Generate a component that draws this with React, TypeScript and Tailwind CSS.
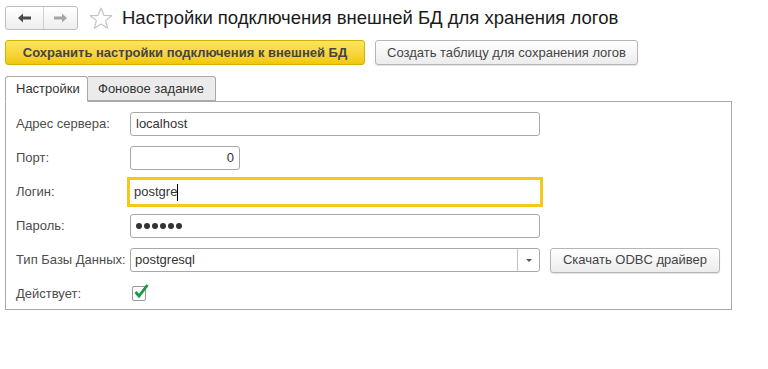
import React from "react";

const font = { fontFamily: '"Liberation Sans", Arial, sans-serif' };

const Field = ({ label, children }: { label: string; children: React.ReactNode }) => (
  <div className="flex items-center h-6">
    <span className="w-[114px] shrink-0 text-[13px] text-[#4d4d4d] whitespace-nowrap">{label}</span>
    {children}
  </div>
);

const inputCls =
  "h-6 border border-[#a9a9a9] rounded-[3px] bg-white px-[5px] flex items-center text-[13px] text-[#333]";

export default function App() {
  return (
    <div className="w-[768px] h-[369px] bg-white pl-[5px] pt-[6px]" style={font}>
      {/* header */}
      <div className="flex items-center h-6">
        <div className="flex h-6 w-[73px] border border-[#bdbdbd] rounded-[3px] bg-gradient-to-b from-white to-[#eeeeee]">
          <div className="w-[38px] flex items-center justify-center border-r border-[#d0d0d0]">
            <svg width="13" height="10" viewBox="0 0 13 10">
              <path d="M0 5 L5 0.5 L5 3.5 L13 3.5 L13 6.5 L5 6.5 L5 9.5 Z" fill="#4a4a4a" />
            </svg>
          </div>
          <div className="flex-1 flex items-center justify-center">
            <svg width="13" height="10" viewBox="0 0 13 10">
              <path d="M13 5 L8 0.5 L8 3.5 L0 3.5 L0 6.5 L8 6.5 L8 9.5 Z" fill="#a6a6a6" />
            </svg>
          </div>
        </div>
        <svg className="ml-[11px]" width="24" height="23" viewBox="0 0 24 23">
          <path
            d="M12 1 L14.9 8.3 L22.7 8.7 L16.6 13.6 L18.7 21.2 L12 16.9 L5.3 21.2 L7.4 13.6 L1.3 8.7 L9.1 8.3 Z"
            fill="none"
            stroke="#c4c4c4"
            strokeWidth="1.2"
            strokeLinejoin="round"
          />
        </svg>
        <h1 className="ml-[9px] text-[18.5px] text-[#1a1a1a] leading-none">
          Настройки подключения внешней БД для хранения логов
        </h1>
      </div>

      {/* toolbar */}
      <div className="flex items-center gap-[10px] mt-[10px]">
        <button className="h-[25px] w-[360px] border border-[#d4b100] rounded-[3px] bg-gradient-to-b from-[#fde55d] to-[#f1c800] text-[13px] font-bold text-[#444]">
          Сохранить настройки подключения к внешней БД
        </button>
        <button className="h-[25px] w-[263px] border border-[#b5b5b5] rounded-[3px] bg-gradient-to-b from-white to-[#ececec] text-[13px] text-[#444] shadow-[0_1px_1px_rgba(0,0,0,0.12)]">
          Создать таблицу для сохранения логов
        </button>
      </div>

      {/* tabs */}
      <div className="flex mt-[11px] h-[25px] relative z-10">
        <div className="w-[83px] h-[26px] border border-[#a9a9a9] border-b-white rounded-t-[3px] bg-white text-[13px] text-[#333] flex items-center pl-[10px]">
          Настройки
        </div>
        <div className="w-[128px] h-[25px] border border-l-0 border-[#a9a9a9] rounded-tr-[3px] bg-[#ebebeb] text-[13px] text-[#333] flex items-center pl-[10px]">
          Фоновое задание
        </div>
      </div>

      {/* panel */}
      <div className="w-[727px] h-[209px] border border-[#a9a9a9] pl-[10px] pt-[10px] flex flex-col gap-[10px]">
        <Field label="Адрес сервера:">
          <div className={`${inputCls} w-[410px]`}>localhost</div>
        </Field>
        <Field label="Порт:">
          <div className={`${inputCls} w-[110px] justify-end`}>0</div>
        </Field>
        <Field label="Логин:">
          <div className="h-[30px] w-[416px] -ml-[3px] border-[3px] border-[#f7c815] bg-white flex items-center pl-[4px] text-[13px] text-[#333]">
            postgre
            <span className="inline-block w-px h-[17px] bg-black" />
          </div>
        </Field>
        <Field label="Пароль:">
          <div className={`${inputCls} w-[410px] gap-[2px]`}>
            {[0, 1, 2, 3, 4, 5].map((i) => (
              <span key={i} className="w-[6px] h-[6px] rounded-full bg-[#333]" />
            ))}
          </div>
        </Field>
        <Field label="Тип Базы Данных:">
          <div className="h-6 w-[410px] border border-[#a9a9a9] rounded-[3px] flex bg-white">
            <div className="flex-1 flex items-center px-[4px] text-[13px] text-[#333]">postgresql</div>
            <div className="w-[22px] border-l border-[#c4c4c4] flex items-center justify-center">
              <svg width="6" height="3" viewBox="0 0 6 3">
                <path d="M0 0 L6 0 L3 3 Z" fill="#555" />
              </svg>
            </div>
          </div>
          <button className="ml-[10px] h-[25px] w-[170px] border border-[#b5b5b5] rounded-[3px] bg-gradient-to-b from-white to-[#ececec] text-[13px] text-[#444] shadow-[0_1px_1px_rgba(0,0,0,0.12)]">
            Скачать ODBC драйвер
          </button>
        </Field>
        <Field label="Действует:">
          <div className="relative ml-[2px] -mt-[2px] w-[14px] h-[15px] border border-[#9a9a9a] rounded-[2px] bg-white">
            <svg className="absolute -top-[4px] left-[1px]" width="15" height="16" viewBox="0 0 15 16">
              <path d="M1.5 9 L5 13 L13.5 2" fill="none" stroke="#179a45" strokeWidth="2.8" />
            </svg>
          </div>
        </Field>
      </div>
    </div>
  );
}
